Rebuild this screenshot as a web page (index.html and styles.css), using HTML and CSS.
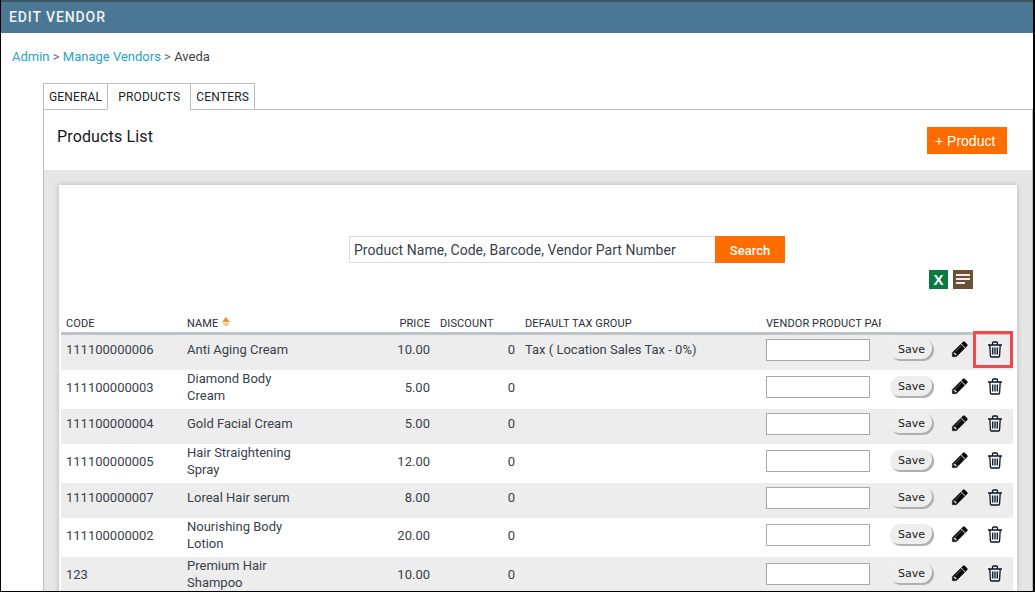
FILE: index.html
```html
<!DOCTYPE html>
<html lang="en">
<head>
<meta charset="utf-8">
<title>Edit Vendor</title>
<link rel="stylesheet" href="styles.css">
</head>
<body>
<svg class="defs" width="0" height="0" aria-hidden="true">
  <symbol id="pencil" viewBox="0 0 1792 1792"><path d="M491 1536l91-91-235-235-91 91v107h128v128h107zm523-928q0-22-22-22-10 0-17 7l-542 542q-7 7-7 17 0 22 22 22 10 0 17-7l542-542q7-7 7-17zm-54-192l416 416-832 832h-416v-416zm683 96q0 53-37 90l-166 166-416-416 166-165q36-38 90-38 53 0 91 38l235 234q37 39 37 91z"/></symbol>
  <symbol id="trash" viewBox="0 0 16 17"><path d="M1 4h14M5.500 4V2.200c0-.7.4-1.200 1-1.200h3c.6 0 1 .5 1 1.200V4M2.800 4l.6 10.800c0 .7.5 1.200 1.100 1.200h7c.6 0 1.100-.5 1.100-1.200L13.200 4M5.700 6.500v7M8 6.500v7M10.300 6.500v7" fill="none" stroke="#0b1526" stroke-width="1.300"/></symbol>
</svg>
<div class="app">
  <header class="topbar">EDIT VENDOR</header>
  <nav class="crumbs"><a>Admin</a> <span class="sep">&gt;</span> <a>Manage Vendors</a> <span class="sep">&gt;</span> <span class="cur">Aveda</span></nav>
  <div class="tabs">
    <div class="tab">GENERAL</div>
    <div class="tab active">PRODUCTS</div>
    <div class="tab">CENTERS</div>
  </div>
  <section class="panel">
    <div class="panel-head">
      <h1>Products List</h1>
      <button class="add">+ Product</button>
    </div>
    <div class="well">
      <div class="card">
        <div class="search">
          <div class="search-input">Product Name, Code, Barcode, Vendor Part Number</div>
          <button class="search-btn">Search</button>
        </div>
        <div class="exports">
          <span class="xl">X</span>
          <span class="notes"><i></i><i></i><i class="short"></i></span>
        </div>
        <table>
          <colgroup>
            <col class="c-code"><col class="c-name"><col class="c-price"><col class="c-disc"><col class="c-tax"><col class="c-vend"><col class="c-save"><col class="c-edit"><col class="c-del">
          </colgroup>
          <thead>
            <tr>
              <th>CODE</th>
              <th>NAME <span class="sort"><b class="up"></b><b class="down"></b></span></th>
              <th class="num">PRICE</th>
              <th>DISCOUNT</th>
              <th>DEFAULT TAX GROUP</th>
              <th class="clip"><div>VENDOR PRODUCT PART</div></th>
              <th></th><th></th><th></th>
            </tr>
          </thead>
          <tbody>
            <tr class="short-row">
              <td>111100000006</td><td>Anti Aging Cream</td><td class="num">10.00</td><td class="num">0</td><td>Tax ( Location Sales Tax - 0%)</td>
              <td><span class="box"></span></td><td><button class="save">Save</button></td>
              <td class="ic"><svg class="pen"><use href="#pencil"/></svg></td><td class="ic"><svg class="bin"><use href="#trash"/></svg></td>
            </tr>
            <tr>
              <td>111100000003</td><td>Diamond Body Cream</td><td class="num">5.00</td><td class="num">0</td><td></td>
              <td><span class="box"></span></td><td><button class="save">Save</button></td>
              <td class="ic"><svg class="pen"><use href="#pencil"/></svg></td><td class="ic"><svg class="bin"><use href="#trash"/></svg></td>
            </tr>
            <tr class="short-row">
              <td>111100000004</td><td>Gold Facial Cream</td><td class="num">5.00</td><td class="num">0</td><td></td>
              <td><span class="box"></span></td><td><button class="save">Save</button></td>
              <td class="ic"><svg class="pen"><use href="#pencil"/></svg></td><td class="ic"><svg class="bin"><use href="#trash"/></svg></td>
            </tr>
            <tr>
              <td>111100000005</td><td>Hair Straightening Spray</td><td class="num">12.00</td><td class="num">0</td><td></td>
              <td><span class="box"></span></td><td><button class="save">Save</button></td>
              <td class="ic"><svg class="pen"><use href="#pencil"/></svg></td><td class="ic"><svg class="bin"><use href="#trash"/></svg></td>
            </tr>
            <tr class="short-row">
              <td>111100000007</td><td>Loreal Hair serum</td><td class="num">8.00</td><td class="num">0</td><td></td>
              <td><span class="box"></span></td><td><button class="save">Save</button></td>
              <td class="ic"><svg class="pen"><use href="#pencil"/></svg></td><td class="ic"><svg class="bin"><use href="#trash"/></svg></td>
            </tr>
            <tr>
              <td>111100000002</td><td>Nourishing Body Lotion</td><td class="num">20.00</td><td class="num">0</td><td></td>
              <td><span class="box"></span></td><td><button class="save">Save</button></td>
              <td class="ic"><svg class="pen"><use href="#pencil"/></svg></td><td class="ic"><svg class="bin"><use href="#trash"/></svg></td>
            </tr>
            <tr>
              <td>123</td><td>Premium Hair Shampoo</td><td class="num">10.00</td><td class="num">0</td><td></td>
              <td><span class="box"></span></td><td><button class="save">Save</button></td>
              <td class="ic"><svg class="pen"><use href="#pencil"/></svg></td><td class="ic"><svg class="bin"><use href="#trash"/></svg></td>
            </tr>
          </tbody>
        </table>
      </div>
    </div>
  </section>
  <div class="callout"></div>
</div>
</body>
</html>
```

FILE: styles.css
```css
* { box-sizing: border-box; }
html, body { margin: 0; padding: 0; height: 592px; overflow: hidden; background: #fff; }
body { font-family: Roboto, "Liberation Sans", sans-serif; color: #3a3f4a; }
.defs { position: absolute; }
.app { position: relative; width: 1035px; height: 592px; overflow: hidden; border: 1px solid #000; border-top: 0; border-right-width: 2px; }
.topbar { height: 33px; background: #4a7793; border-top: 2px solid #3c5563; color: #eef3f6; font-size: 14px; font-weight: 500; letter-spacing: .9px; line-height: 30px; padding-left: 8px; }
.crumbs { height: 50px; padding: 16px 0 0 11px; font-size: 13px; line-height: 16px; }
.crumbs a { color: #27a3c4; }
.crumbs .sep { color: #666; font-size: 13px; }
.crumbs .cur { color: #3a3f4a; }
.tabs { display: flex; margin-left: 42px; height: 27px; position: relative; z-index: 1; }
.tab { border: 1px solid #bdbdbd; padding: 0 5px; font-size: 12px; letter-spacing: .17px; line-height: 26px; color: #1c1f26; background: #fff; margin-right: -1px; }
.tab.active { border-bottom-color: #fff; padding: 0 10px; }
.panel { margin: -1px 0 0 42px; height: 500px; border: 1px solid #bdbdbd; }
.panel-head { height: 60px; display: flex; justify-content: space-between; align-items: flex-start; padding: 0 25px 0 13px; }
.panel-head h1 { margin: 17px 0 0; font-size: 16px; font-weight: 400; letter-spacing: .15px; line-height: 20px; color: #16181d; }
.add { margin-top: 17px; width: 80px; height: 27px; background: #ff6c00; border: 0; color: #fff; font: 14px/27px "Liberation Sans", sans-serif; padding: 1px 0 0 8px; text-align: left; }
.well { background: #e6e6e6; height: 440px; padding: 15px 15px 0; }
.card { background: #fff; height: 430px; width: 958px; box-shadow: 0 0 5px rgba(0,0,0,.22); padding: 51px 4px 0 2px; }
.search { display: flex; margin-left: 288px; height: 27px; }
.search-input { width: 366px; height: 27px; border: 1px solid #ddd; border-right: 0; padding-left: 4px; font-size: 14px; letter-spacing: .04px; line-height: 26px; color: #3a3f4a; }
.search-btn { width: 70px; height: 27px; background: #ff6c00; color: #fff; border: 0; padding: 1px 0 0; font: 500 13px/27px Roboto, sans-serif; }
.exports { display: flex; justify-content: flex-end; gap: 5px; margin: 7px 40px 0 0; height: 19px; }
.xl { width: 19px; height: 19px; background: #0b7a3e; color: #fff; font: 700 15px/19px "Liberation Sans", sans-serif; text-align: center; }
.notes { width: 20px; height: 19px; background: #6b5138; display: flex; flex-direction: column; gap: 2px; padding: 4px 3px 0; }
.notes i { display: block; height: 2px; background: #f1ece6; }
.notes i.short { width: 9px; }
table { border-collapse: separate; border-spacing: 0; table-layout: fixed; width: 952px; margin-top: 20px; font-size: 13px; }
.c-code { width: 121px; } .c-name { width: 123px; } .c-price { width: 130px; } .c-disc { width: 85px; }
.c-tax { width: 241px; } .c-vend { width: 124px; } .c-save { width: 55px; } .c-edit { width: 37px; } .c-del { width: 36px; }
th { height: 26px; padding: 5px 5px 0; font-size: 11px; font-weight: 400; letter-spacing: .1px; color: #2a2d35; text-align: left; border-bottom: 3px solid #bfc4c9; white-space: nowrap; vertical-align: middle; }
th.num, td.num { text-align: right; }
th.clip { padding-right: 0; }
th.clip div { width: 115px; overflow: hidden; }
td { padding: 0 5px 5px; line-height: 17px; height: 39px; vertical-align: middle; }
tbody tr:nth-child(odd) { background: #ededed; }
tbody tr:last-child { background: #ededed; }
tbody tr.short-row td { height: 35px; }
tbody tr.short-row td:nth-child(-n+5) { padding-bottom: 6px; }
.box { display: block; width: 104px; height: 22px; background: #fff; border: 1px solid #a9a9a9; }
.save { display: block; width: 44px; height: 22px; padding: 0 1px 0 0; border: 0; border-radius: 11px; background: #eee; box-shadow: inset -2px -2px 0 #b0b0b0; color: #1a1a1a; font: 11px/22px "DejaVu Sans", sans-serif; }
td.ic { padding: 0 0 7px; }
.pen { display: block; width: 18px; height: 18px; margin-left: 11px; fill: #0a0a0a; stroke: #0a0a0a; stroke-width: 30; }
.bin { display: block; width: 16px; height: 17px; margin-left: 10px; }
.sort { display: inline-block; width: 8px; height: 11px; vertical-align: -1px; margin-left: 1px; }
.sort b { display: block; width: 0; height: 0; border-left: 4px solid transparent; border-right: 4px solid transparent; }
.sort .up { border-bottom: 5px solid #f0931e; margin-bottom: 1px; }
.sort .down { border-top: 4px solid #f6c78c; }
.callout { position: absolute; left: 972px; top: 331px; width: 40px; height: 37px; border: 3px solid #f5474b; }
```
